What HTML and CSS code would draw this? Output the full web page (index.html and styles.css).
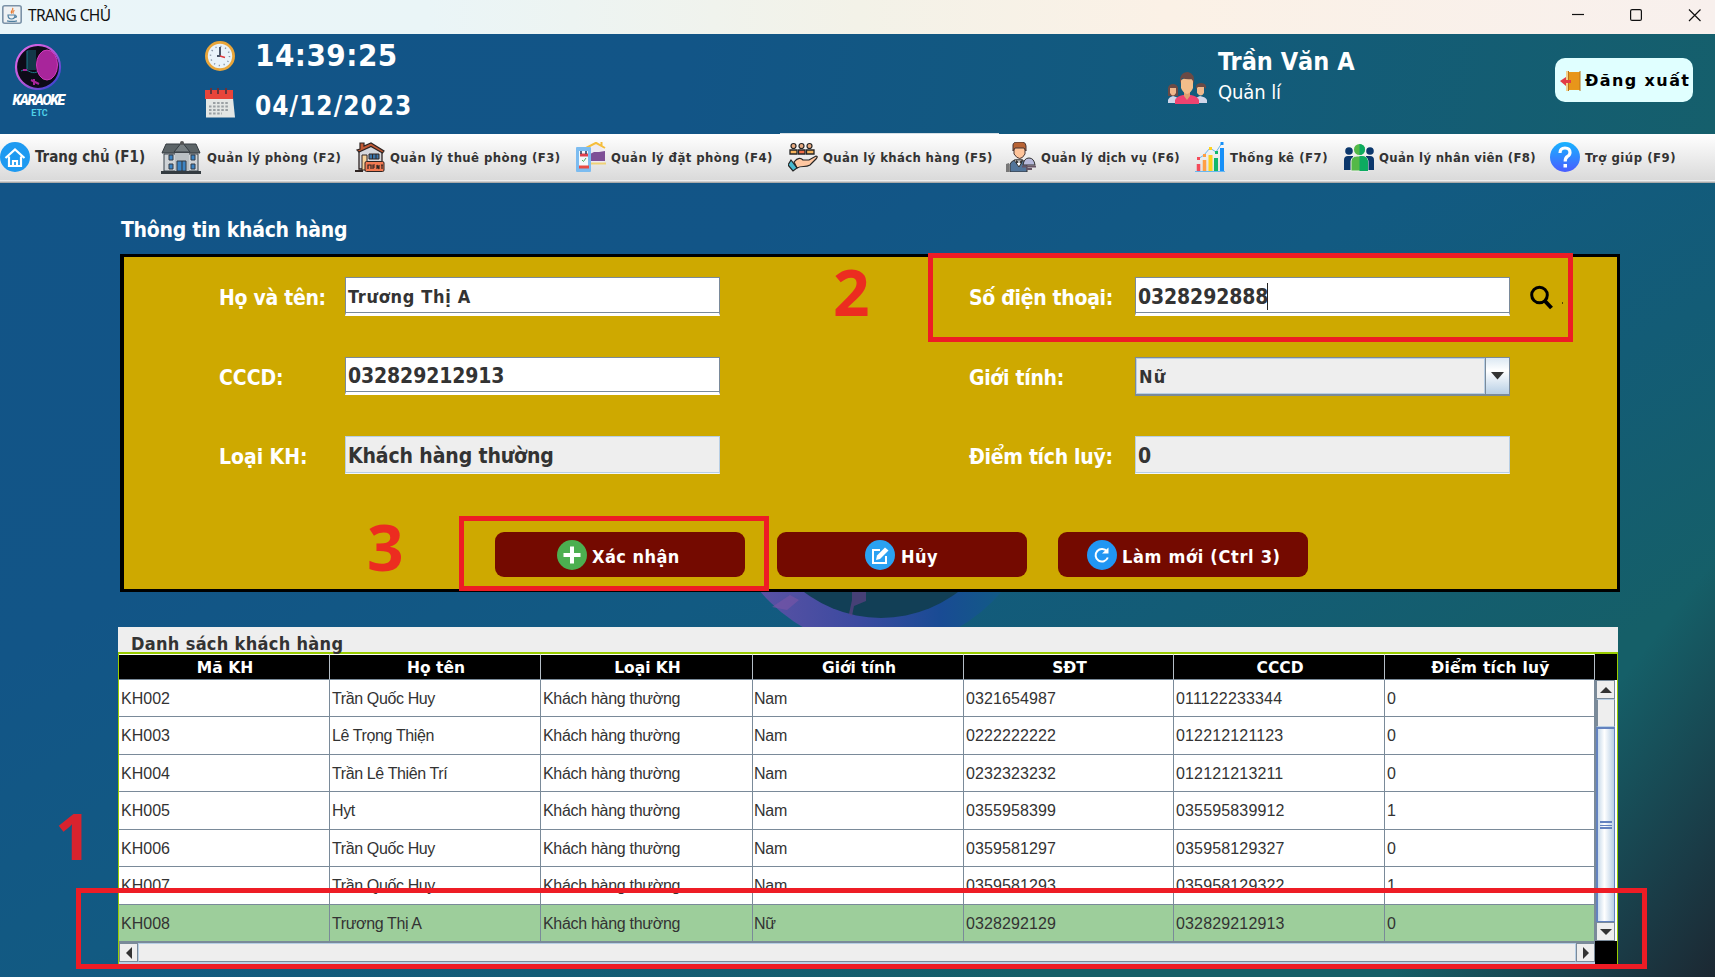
FILE: index.html
```html
<!DOCTYPE html>
<html lang="vi">
<head>
<meta charset="utf-8">
<title>TRANG CHỦ</title>
<link rel="stylesheet" href="styles.css">
</head>
<body>
<div class="titlebar">
  <svg class="java" width="20" height="19" viewBox="0 0 20 19"><rect x=".8" y=".8" width="18.4" height="17.4" rx="2" fill="#eef1f3" stroke="#7b92a8" stroke-width="1.6"/><path d="M10.5 3c2 2-3 3-.8 5.500M12.500 5.500c-2 1-2 1.500-1 3" fill="none" stroke="#e8762c" stroke-width="1.200"/><path d="M6 10h7c0 3-1 4-3.500 4S6 13 6 10zM13 10.500c2 0 2 2 0 2M5 15.800c3 .8 7 .8 10 0" fill="none" stroke="#4f7fa0" stroke-width="1.200"/></svg>
  <span class="title-text">TRANG CHỦ</span>
  <svg class="winctl" width="130" height="34" viewBox="0 0 130 34" fill="none" stroke="#111" stroke-width="1.200"><path d="M0 14.500h12"/><rect x="58.600" y="9.600" width="10.800" height="10.800" rx="1.500"/><path d="M117 9.500l11.500 11.500M128.500 9.500L117 21"/></svg>
</div>
<header class="header">
  <div class="logo">
    <svg width="48" height="46" viewBox="0 0 48 46"><defs><linearGradient id="ring" x1="0" y1="0" x2="1" y2="1"><stop offset="0" stop-color="#e06be8"/><stop offset=".5" stop-color="#b455d8"/><stop offset="1" stop-color="#1f3fd0"/></linearGradient></defs><circle cx="24" cy="23" r="22" fill="#0d0b18" stroke="url(#ring)" stroke-width="2.200"/><rect x="13" y="6" width="9" height="20" fill="#123848"/><path d="M7 27c6-4 9 4 16 1M13 7v18" stroke="#1d7a8c" fill="none"/><ellipse cx="33" cy="21" rx="10.500" ry="15" fill="#a8259b" stroke="#d13bbd"/><path d="M20 35v6M17 36l8 4M9 26h4" stroke="#a8259b" stroke-width="2"/></svg>
    <span class="logo-name">KARAOKE</span><span class="logo-etc">ETC</span>
  </div>
  <div class="clock">
    <svg width="30" height="30" viewBox="0 0 30 30"><circle cx="15" cy="15" r="13.600" fill="#e9f3fa" stroke="#e9a63a" stroke-width="2.800"/><circle cx="15" cy="15" r="9.500" fill="none" stroke="#8492a3" stroke-width="1.500" stroke-dasharray="1.200 3.775"/><path d="M15 16V6M15 15h-3" stroke="#4a5568" stroke-width="2"/><path d="M15 15l5 1.500" stroke="#e0393e" stroke-width="1.400"/></svg>
    <span class="time">14:39:25</span>
    <svg width="30" height="30" viewBox="0 0 30 30"><path d="M1 10h27l2 19.500H1z" fill="#e3e6e4"/><path d="M0 2h28v9H0z" fill="#e8443a"/><path d="M6 0v6M13 0v6M21 0v6" stroke="#6b3238" stroke-width="2"/><path d="M8 15h16M4 18.500h20M4 22h20M4 25.500h13" stroke="#9aa0a3" stroke-width="1.800" stroke-dasharray="2.500 1.600"/></svg>
    <span class="date">04/12/2023</span>
  </div>
  <div class="user">
    <svg width="40" height="32" viewBox="0 0 40 32"><path d="M1 31V28q1-3 5-4q5 1 6 4v3zM28 31v-3q1-3 5-4q6 1 7 4v3z" fill="#cfd6ea"/><path d="M1 24V16q1-4 5-4t5 4v8z" fill="#6b4a45"/><path d="M3 16h6v5q-3 5-6 0zM30 15h7v6q-3 5-7 0z" fill="#f0b88c"/><path d="M29 17q-1-6 5-6t5 6l-2-2h-6z" fill="#6b4a45"/><path d="M8 32v-4q2-4 8-5h8q6 1 8 5v4z" fill="#ef4370"/><path d="M17 19h6v5l-3 4-3-4z" fill="#e0a070"/><path d="M14 8q6-4 12 0v8q-2 5-6 6-4-1-6-6z" fill="#f2bd8a"/><path d="M13 12q-1-12 8-12 7 1 6 12l-2-5q-5 1-10-1z" fill="#6b4a45"/></svg>
    <div class="user-text"><span class="user-name">Trần Văn A</span><span class="user-role">Quản lí</span></div>
  </div>
  <button class="logout"><svg width="21" height="22" viewBox="0 0 21 22"><path d="M8 2h12v18H8z" fill="#e89c1c"/><path d="M6 1h3v20H6z" fill="#f3d08c"/><path d="M9 2.500h11v17H9z" fill="#e8961a"/><path d="M20 1v20M8.500 1v20" stroke="#b8741a"/><path d="M0 11l6-4v3h5v3H6v3z" fill="#e23c46"/></svg><span>Đăng xuất</span></button>
</header>
<nav class="nav">
  <a class="n1"><svg width="30" height="30" viewBox="0 0 30 30"><circle cx="15" cy="15" r="15" fill="#1e9af1"/><path d="M5.500 16L15 7.500l9.500 8.500M9 14.500v9.500h12v-9.500M13 24v-5h4v5" fill="none" stroke="#fff" stroke-width="2.200"/></svg><span>Trang chủ (F1)</span></a>
  <a class="n2"><svg width="40" height="35" viewBox="0 0 40 35"><path d="M3 14h34v17H3z" fill="#cfd3d6" stroke="#3b444c"/><path d="M5 4h30l4 9H1z" fill="#5c6467" stroke="#343b40"/><path d="M13 12l8-10 8 10z" fill="#777f82" stroke="#343b40"/><circle cx="21" cy="3" r="2" fill="#555"/><path d="M14 13h14v18H14z" fill="#b9bfc3"/><path d="M8 15h4v5H8zM8 24h4v5H8zM30 15h4v5h-4zM30 24h4v5h-4zM16 21h9v10h-9z" fill="#3c84c4" stroke="#333b44"/><path d="M21 21v10" stroke="#333"/><path d="M0 31h40v3H0z" fill="#343b40"/></svg><span>Quản lý phòng (F2)</span></a>
  <a class="n3"><svg width="30" height="30" viewBox="0 0 30 30" stroke="#2e2422"><path d="M4 10v17h23V9L16 4 4 9z" fill="#d5d7dc" stroke-width="1.300"/><path d="M7 13h5v15H7z" fill="#f8d39a"/><path d="M14 12h10v5H14z" fill="#3b75a8"/><path d="M17.500 12v5M21 12v5" stroke-width="1"/><path d="M5 7V1h4v3l7-3 13 8-1.500 2L16 4.500 4 10l-2-2z" fill="#c25a35" stroke-width="1.200"/><path d="M0 29h8" stroke-width="2"/><rect x="10" y="19.500" width="19" height="10" rx="1.500" fill="#f27a52"/><path d="M13 27v-4h3v4M18 27v-4h2M18 25h2M22 27v-4l2 4v-4M26 23h2M27 23v4" fill="none" stroke-width="1.200"/></svg><span>Quản lý thuê phòng (F3)</span></a>
  <a class="n4"><svg width="30" height="30" viewBox="0 0 30 30"><path d="M13 8L20 1l8 7v14H15z" fill="#eeeaf2"/><path d="M10 6L20 .8 29 6M25.500 4V0" fill="none" stroke="#f5bd3d" stroke-width="2"/><path d="M14 12l4-2h5l6-1v10H14z" fill="#7e4f96"/><path d="M15 21.500h15" stroke="#f0d277" stroke-width="2"/><rect x="0" y="5" width="15" height="25" rx="1" fill="#7cbcf0"/><path d="M3 9h9v15H3z" fill="#f4f9fc"/><path d="M4 13h8" stroke="#df4250" stroke-width="3"/><path d="M3 25h10" stroke="#e94b43" stroke-width="3"/><path d="M5 9v3M10 9v3" stroke="#2b3759" stroke-width="1.500"/><path d="M6 18l1.500 1.500L10 16" fill="none" stroke="#4bad61"/></svg><span>Quản lý đặt phòng (F4)</span></a>
  <a class="n5"><svg width="30" height="30" viewBox="0 0 30 30" stroke="#252525"><path d="M2 12V8h7v4zM18.500 12V8H26v4z" fill="#f6b45c" stroke-width="1.300"/><path d="M10.500 12V8H17v4z" fill="#f36e48" stroke-width="1.300"/><g fill="#e8aa80" stroke-width="1.200"><circle cx="5.500" cy="4" r="2.500"/><circle cx="13.500" cy="4" r="2.500"/><circle cx="21.500" cy="4" r="2.500"/></g><path d="M6 20c4-5 7-4 9-2h6l7-4c2 0 1 2 0 3l-6 6c-5 3-8 0-13 3z" fill="#ffc7a1" stroke-width="1.200"/><path d="M3 18l6 8-4 3-5-6z" fill="#48b9d0" stroke-width="1.200"/></svg><span>Quản lý khách hàng (F5)</span></a>
  <a class="n6"><svg width="30" height="30" viewBox="0 0 30 30"><path d="M4 30v-8q2-4 6-4h6q5 2 5 6v6z" fill="#52759a" stroke="#333"/><path d="M0 30v-8l3-1v9z" fill="#777"/><path d="M8 18l5 7 4-7z" fill="#fff" stroke="#333"/><path d="M8 4h11v8q-5 9-11 0z" fill="#ffc49a" stroke="#463432"/><path d="M7 9V3q0-3 5-3h5q3 1 3 4v5l-2-3H9z" fill="#b86334" stroke="#463432"/><path d="M10 18l3 2 3-2v4l-3-2-3 2z" fill="#333"/><path d="M17 23q1-7 6-7t6 7z" fill="#b8badb" stroke="#333"/><path d="M16 24.500h14M20 27h6" stroke="#665566" stroke-width="2"/></svg><span>Quản lý dịch vụ (F6)</span></a>
  <a class="n7"><svg width="30" height="30" viewBox="0 0 30 30"><path d="M3.500 30V22" stroke="#f44b5b" stroke-width="3.500"/><path d="M9.500 30V18" stroke="#ff9f43" stroke-width="3.500"/><path d="M15.500 30V13" stroke="#ffd21f" stroke-width="4"/><path d="M21 30V16" stroke="#12b76a" stroke-width="4"/><path d="M27 30V6" stroke="#1790f8" stroke-width="4"/><path d="M3 17l6-4 6-7 6 4 6-9M0 29.500h30" fill="none" stroke="#68b8f0"/><path d="M2 15h3v3H2z" fill="#f44b5b"/><path d="M8 12h3v3H8z" fill="#ff9f43"/><path d="M14 5h3v3h-3z" fill="#ffd21f"/><path d="M20 9h3v3h-3z" fill="#12b76a"/><path d="M25.500 0h3v3h-3z" fill="#1790f8"/></svg><span>Thống kê (F7)</span></a>
  <a class="n8"><svg width="30" height="30" viewBox="0 0 30 30"><g fill="#0b376c"><circle cx="5" cy="9" r="3.800"/><circle cx="26" cy="9" r="3.800"/><path d="M0 28V18q0-4 4-4h5v14zM22 14h4q4 0 4 4v10h-8z"/></g><path d="M7 29V19q1-5 6-5h5q5 0 6 5v10z" fill="#54b948" stroke="#eee"/><path d="M15.500 14H18q5 0 6 5v10h-8.500z" fill="#0cab60"/><circle cx="15.500" cy="7.500" r="5.500" fill="#54b948"/><path d="M15.500 2a5.500 5.500 0 0 1 0 11z" fill="#0cab60"/></svg><span>Quản lý nhân viên (F8)</span></a>
  <a class="n9"><svg width="30" height="30" viewBox="0 0 30 30"><defs><linearGradient id="hg" x2="0" y2="1"><stop stop-color="#18b4ff"/><stop offset="1" stop-color="#4a5cff"/></linearGradient></defs><circle cx="15" cy="15" r="15" fill="url(#hg)"/><path d="M10 11q0-5 5-5t5 4.500q0 2.500-2.500 4-2.300 1.300-2.300 5" fill="none" stroke="#fff" stroke-width="3.200"/><path d="M13.500 22h3.500v3.500h-3.500z" fill="#fff"/></svg><span>Trợ giúp (F9)</span></a>
  <i class="active-tab"></i>
</nav>
<main class="main">
  <svg class="bg-disc" width="320" height="40" viewBox="720 590 320 40"><defs><linearGradient id="disc" gradientUnits="userSpaceOnUse" x1="760" x2="1000" y1="0" y2="0"><stop offset="0" stop-color="#5a52a4"/><stop offset=".4" stop-color="#3c4aa0"/><stop offset=".75" stop-color="#194b94"/><stop offset="1" stop-color="#125a86"/></linearGradient></defs><circle cx="881" cy="491" r="157" fill="url(#disc)"/><circle cx="881" cy="491" r="127" fill="#123f56"/><path d="M852 590v10l-3 14 3 2 2-10 12-5V590z" fill="#5d4185" opacity=".7"/><path d="M772 607l18-12 9 5-12 10z" fill="#7b55a6" opacity=".6"/></svg>
  <h1 class="form-title">Thông tin khách hàng</h1>
  <form class="panel" onsubmit="return false">
    <div class="grid">
      <label class="tight">Họ và tên:</label><div class="field"><span class="v18">Trương Thị A</span></div>
      <label class="tight">Số điện thoại:</label><div class="field"><span>0328292888</span><i class="caret"></i></div>
      <label>CCCD:</label><div class="field"><span>032829212913</span></div>
      <label class="tight">Giới tính:</label><div class="combo"><div class="combo-text"><span class="v18">Nữ</span></div><div class="combo-btn"><svg width="13" height="8" viewBox="0 0 13 8"><path d="M0 0h13L6.500 7.500z" fill="#333"/></svg></div></div>
      <label class="last">Loại KH:</label><div class="field off"><span>Khách hàng thường</span></div>
      <label class="tight last">Điểm tích luỹ:</label><div class="field off"><span>0</span></div>
    </div>
    <svg class="search" width="36" height="26" viewBox="0 0 36 26"><circle cx="9.500" cy="10" r="7.800" fill="none" stroke="#000" stroke-width="3"/><path d="M14 15l7.500 8" stroke="#000" stroke-width="4"/><path d="M32 17h1v2h-1z" fill="#5a4a00"/></svg>
    <div class="buttons">
      <button class="b1"><svg width="30" height="30" viewBox="0 0 30 30"><circle cx="15" cy="15" r="15" fill="#4caf50"/><path d="M15 6.500v17M6.500 15h17" stroke="#fff" stroke-width="4"/></svg><span>Xác nhận</span></button>
      <button class="b2"><svg width="30" height="30" viewBox="0 0 30 30"><circle cx="15" cy="15" r="15" fill="#2aa1f2"/><path d="M15 10H8v13h13v-7" fill="none" stroke="#fff" stroke-width="2"/><path d="M12 15.500l8-8 3.500 3-8.500 8.500-4 1z" fill="#fff"/></svg><span>Hủy</span></button>
      <button class="b3"><svg width="30" height="30" viewBox="0 0 30 30"><circle cx="15" cy="15" r="15" fill="#2196f3"/><path d="M20 11.500a6.300 6.300 0 1 0 .8 6" fill="none" stroke="#fff" stroke-width="2"/><path d="M21.500 7.500v6h-6.500z" fill="#fff"/></svg><span>Làm mới (Ctrl 3)</span></button>
    </div>
  </form>
  <section class="list">
    <h2 class="list-title">Danh sách khách hàng</h2>
    <div class="scrollpane">
      <table class="tbl">
        <colgroup><col class="c211"><col class="c211"><col class="c212"><col class="c211"><col class="c210"><col class="c211"><col class="c210"></colgroup>
        <thead><tr><th>Mã KH</th><th>Họ tên</th><th>Loại KH</th><th>Giới tính</th><th>SĐT</th><th>CCCD</th><th>Điểm tích luỹ</th></tr></thead>
        <tbody>
          <tr><td>KH002</td><td>Trần Quốc Huy</td><td>Khách hàng thường</td><td>Nam</td><td>0321654987</td><td>011122233344</td><td>0</td></tr>
          <tr><td>KH003</td><td>Lê Trọng Thiện</td><td>Khách hàng thường</td><td>Nam</td><td>0222222222</td><td>012212121123</td><td>0</td></tr>
          <tr><td>KH004</td><td>Trần Lê Thiên Trí</td><td>Khách hàng thường</td><td>Nam</td><td>0232323232</td><td>012121213211</td><td>0</td></tr>
          <tr><td>KH005</td><td>Hyt</td><td>Khách hàng thường</td><td>Nam</td><td>0355958399</td><td>035595839912</td><td>1</td></tr>
          <tr><td>KH006</td><td>Trần Quốc Huy</td><td>Khách hàng thường</td><td>Nam</td><td>0359581297</td><td>035958129327</td><td>0</td></tr>
          <tr><td>KH007</td><td>Trần Quốc Huy</td><td>Khách hàng thường</td><td>Nam</td><td>0359581293</td><td>035958129322</td><td>1</td></tr>
          <tr class="sel"><td>KH008</td><td>Trương Thị A</td><td>Khách hàng thường</td><td>Nữ</td><td>0328292129</td><td>032829212913</td><td>0</td></tr>
        </tbody>
      </table>
      <div class="vbar"><i class="sq up"></i><i class="track"></i><i class="thumb"></i><i class="sq down"></i></div>
      <div class="hbar"><i class="sq left"></i><i class="htrack"></i><i class="sq right"></i></div>
      <div class="corner"></div>
    </div>
  </section>
</main>
<div class="mark m1"></div><div class="mark m2"></div><div class="mark m3"></div>
<span class="num d1">1</span><span class="num d2">2</span><span class="num d3">3</span>
</body>
</html>
```
FILE: styles.css
```css
* { box-sizing: border-box; }
html, body { margin: 0; height: 977px; overflow: hidden; }
body {
  position: relative; width: 1715px; display: flex; flex-direction: column;
  font-family: "DejaVu Sans Condensed", "DejaVu Sans", sans-serif; font-stretch: condensed; font-weight: bold; color: #333;
}
h1, h2 { margin: 0; font-size: inherit; }
svg { display: block; flex: none; }
span { white-space: nowrap; }
.titlebar { height: 34px; display: flex; background: linear-gradient(90deg, #eaf5f9 0%, #eaf5f7 25%, #f3f2e8 50%, #fbf1e6 68%, #f8f0ed 100%); padding: 5px 13px 0 2px; }
.title-text { margin-left: 6px; font: 15.5px/21px "Noto Sans", sans-serif; letter-spacing: -.6px; color: #111; }
.winctl { margin: -5px 0 0 auto; }
.header { height: 100px; display: flex; background: linear-gradient(98deg, #125487 0%, #125587 40%, #125a7e 65%, #155f6c 100%); }
.logo { width: 76px; display: flex; flex-direction: column; align-items: center; padding-top: 10px; line-height: 1; }
.logo-name { font: italic 900 14px/15px Roboto, sans-serif; letter-spacing: -1.5px; color: #fff; margin-top: 3px; }
.logo-etc { font: bold 9px/9px Roboto, sans-serif; color: #4fd0e8; margin: 1px 0 0 3px; }
.clock { margin-left: 129px; display: grid; grid-template-columns: 50px 160px; align-content: start; align-items: center; grid-template-rows: 43px 54px; color: #fff; }
.time { font-size: 31px; line-height: 43px; letter-spacing: .5px; }
.date { font-size: 26px; line-height: 50px; padding-top: 4px; letter-spacing: 1px; }
.clock svg:nth-child(3) { margin-top: -3px; }
.user { margin-left: 752px; display: flex; padding-top: 11px; color: #fff; }
.user > svg { margin: 27px 11px 0 0; }
.user-text { display: flex; flex-direction: column; width: 150px; }
.user-name { font-size: 25px; line-height: 34px; }
.user-role { font-size: 20px; line-height: 27px; font-weight: normal; letter-spacing: -.1px; }
.logout { margin: 24px 22px 0 auto; width: 138px; height: 44px; border: 0; border-radius: 10px; background: #e0ffff; display: flex; align-items: center; padding: 1px 0 0 5px; gap: 4px; font: bold 16px "DejaVu Sans", sans-serif; letter-spacing: 1.4px; color: #000; }
.nav { position: relative; height: 49px; display: flex; background: linear-gradient(#fff, #dadada 94%, #f0f0f0 95%, #999); font-size: 13px; }
.nav a { display: flex; align-items: center; gap: 5px; height: 46px; letter-spacing: .42px; }
.nav .n1 { width: 161px; font-size: 15px; letter-spacing: 0; }
.nav .n2 { width: 194px; gap: 6px; letter-spacing: .43px; }
.n3 { width: 221px; }
.n4 { width: 212px; }
.nav .n5 { width: 218px; letter-spacing: .36px; }
.nav .n6 { width: 189px; letter-spacing: .3px; }
.nav .n7 { width: 149px; letter-spacing: .51px; }
.nav .n8 { width: 206px; letter-spacing: .31px; }
.nav .n9 { letter-spacing: .51px; }
.active-tab { position: absolute; left: 780px; top: -1px; width: 219px; height: 1px; background: #d5dfe5; }
.main {
  flex: 1; position: relative; padding: 0 97px 0 118px;
  background:
    linear-gradient(128deg, rgba(28,40,50,0) 86%, rgba(28,44,56,.7) 95%, #1c2832 100%),
    linear-gradient(150deg, #125487 0%, #125587 27%, #125a82 46%, #135c76 62%, #155f68 78%);
}
.bg-disc { position: absolute; left: 720px; top: 407px; }
.form-title { height: 71px; padding: 30px 0 0 3px; font-size: 21px; line-height: 34px; letter-spacing: -.27px; color: #fff; }
.panel { position: relative; margin-left: 2px; width: 1500px; height: 338px; border: 3px solid #000; border-left-width: 4px; background: #cea900; }
.grid { display: grid; grid-template-columns: 126px 624px 166px 375px; padding: 20px 0 0 95px; row-gap: 41px; }
.grid label { height: 38.500px; font-size: 21px; line-height: 43px; letter-spacing: -.04px; color: #fff; }
.grid .tight { letter-spacing: -.3px; }
.grid .last { line-height: 41px; }
.field { width: 375px; height: 38.500px; display: flex; align-items: center; padding: 3px 0 0 2px; font-size: 21px; letter-spacing: -.12px; background: #fff; border: solid #7a8a99; border-width: 1px 1px 3px 1px; border-bottom-color: #fff; box-shadow: inset 0 -1px #7a8a99; }
.field.off { height: 38px; margin-top: -1px; background: #eee; border-color: #b8cfe5; border-bottom: 1px solid #f4f8fb; box-shadow: inset 0 -1px #b8cfe5; }
.field .v18 { font-size: 18px; letter-spacing: .68px; margin-top: -1px; }
.caret { width: 1px; height: 27px; background: #222; margin-left: -1px; }
.combo { width: 375px; height: 39px; display: flex; border: 1px solid #7a8a99; border-bottom-width: 2px; background: #eee; }
.combo-text { flex: 1; border: 1px solid #b8cfe5; padding: 1px 0 0 2px; display: flex; align-items: center; font-size: 18px; letter-spacing: 1.3px; }
.combo-btn { width: 24px; border-left: 1px solid #7a8a99; background: linear-gradient(#dbe8f3, #fff 35%, #b8cfe5); display: flex; align-items: center; justify-content: center; }
.search { position: absolute; left: 1406px; top: 28px; }
.buttons { display: flex; padding: 57px 0 0 371px; }
.buttons button { width: 250px; height: 45px; border: 0; border-radius: 9px; background: #740a00; color: #fff; display: flex; align-items: center; gap: 5px; font: bold 18px "DejaVu Sans Condensed", sans-serif; font-stretch: condensed; padding: 0; letter-spacing: .45px; }
.buttons span { padding-top: 3px; }
.buttons .b1 { padding-left: 62px; margin-right: 32px; }
.buttons .b2 { padding-left: 88px; margin-right: 31px; gap: 6px; }
.buttons .b3 { padding-left: 29px; letter-spacing: .68px; }
.list { position: relative; margin-top: 35px; width: 1500px; height: 337px; background: #eee; }
.list-title { height: 25px; padding-left: 13px; font-size: 18px; line-height: 33px; letter-spacing: .32px; }
.scrollpane { height: 312px; border: solid #9c0; border-width: 2px 1px 0 1px; display: grid; grid-template-columns: 1476px 22px; grid-template-rows: 287px 23px; background: #000; }
.tbl { position: relative; width: 1476px; border-collapse: separate; border-spacing: 0; table-layout: fixed; grid-area: 1/1; font: 16px "Liberation Sans", sans-serif; }
.c210 { width: 210px; } .c211 { width: 211px; } .c212 { width: 212px; }
.tbl th { height: 26px; padding: 3px 0 0 2px; font: bold 15.5px/19px "DejaVu Sans", sans-serif; color: #fff; background: #000; border-right: 1px solid #b5bec7; border-top: 1px solid #fff; border-bottom: 1px solid #7a8a99; }
.tbl th:last-child { letter-spacing: .25px; }
.tbl td { height: 37px; padding: 2px 0 0 2px; background: #fff; border-right: 1px solid #7a8a99; border-bottom: 1px solid #7a8a99; line-height: 20px; }
.tbl tbody tr:nth-child(even) td { height: 38px; padding-top: 0; }
.tbl td:nth-child(2) { letter-spacing: -.38px; }
.tbl td:nth-child(3) { letter-spacing: -.3px; }
.tbl td:nth-child(4) { letter-spacing: -.2px; padding-left: 1px; }
.tbl td:nth-child(5) { letter-spacing: .1px; }
.tbl td:nth-child(6) { letter-spacing: .15px; }
.tbl .sel td { background: #9dce9b; }
.vbar { grid-area: 1/2; margin-top: 26px; display: flex; flex-direction: column; background: #fff; border-left: 1px solid #7a8a99; padding-right: 2px; }
.hbar { grid-area: 2/1; display: flex; background: #eee; border-top: 2px solid #7a8a99; border-bottom: 2px solid #b8cfe5; }
.corner { background: #000; grid-area: 2/2; }
.sq { flex: none; width: 19px; height: 19px; background: #eee; border: 1px solid #7a8a99; display: flex; align-items: center; justify-content: center; }
.sq::after { content: ""; border: 6px solid transparent; }
.up::after { border-top: 0; border-bottom-color: #333; }
.down::after { border-bottom: 0; border-top-color: #333; }
.left::after { border-left: 0; border-right-color: #333; }
.right::after { border-right: 0; border-left-color: #333; }
.track { height: 28px; background: #eee; border: 1px solid #b8cfe5; border-left: 2px solid #7a8a99; border-right-color: #7a8a99; }
.thumb { flex: 1; border: 1px solid #6382bf; border-top-width: 2px; border-left-width: 2px; background: linear-gradient(#6382bf, #6382bf) 50% 50%/12px 1px no-repeat, linear-gradient(#6382bf, #6382bf) 50% calc(50% - 3px)/12px 2px no-repeat, linear-gradient(#6382bf, #6382bf) 50% calc(50% + 3px)/12px 2px no-repeat, linear-gradient(90deg, #c8daea, #fff 40%, #b8cfe5); }
.htrack { flex: 1; border: 1px solid #b8cfe5; border-bottom-color: #7a8a99; }
.mark { position: absolute; border: 5px solid #ee1c25; }
.m1 { left: 76px; top: 888px; width: 1571px; height: 81px; }
.m2 { left: 928px; top: 253px; width: 645px; height: 89px; }
.m3 { left: 459px; top: 516px; width: 310px; height: 75px; }
.num { position: absolute; font: bold 64px/64px "Noto Sans", sans-serif; color: #ec2c20; }
.d1 { left: 55px; top: 804px; color: #d8232e; }
.d2 { left: 833px; top: 260px; }
.d3 { left: 367px; top: 515px; }
```
